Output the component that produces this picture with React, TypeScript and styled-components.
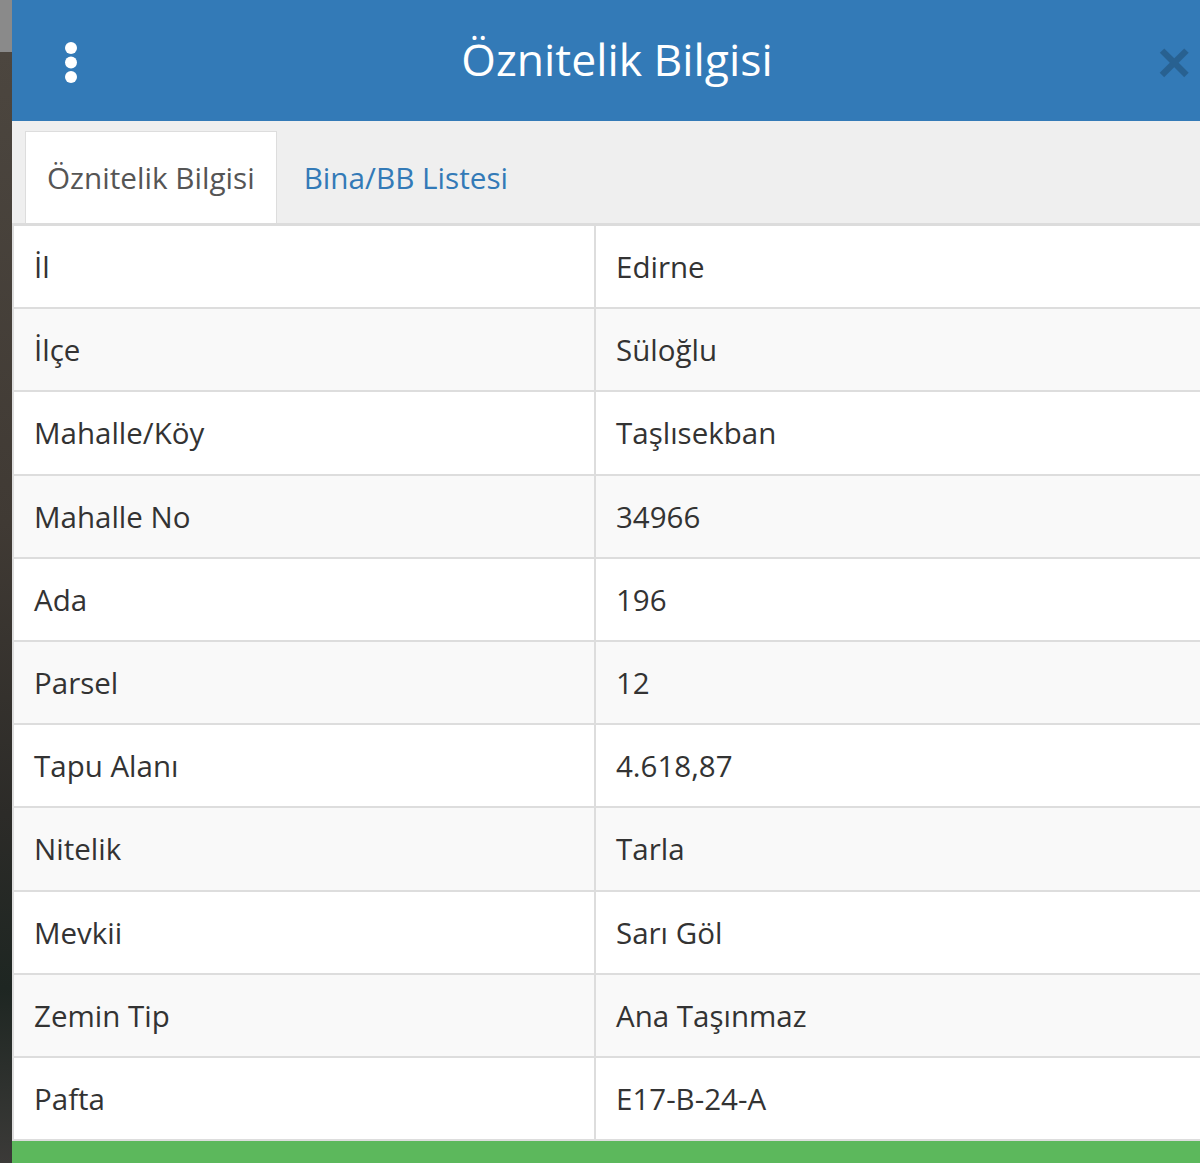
import React from "react";
import styled, { createGlobalStyle } from "styled-components";

const Global = createGlobalStyle`
  html, body { margin: 0; padding: 0; }
  body {
    width: 1200px;
    height: 1163px;
    overflow: hidden;
    font-family: "Open Sans", "Noto Sans", sans-serif;
    background: linear-gradient(to bottom, #8a8a8a 0, #8a8a8a 52px, #4c463f 52px, #403a34 45%, #2c2b28 70%, #1e2622 85%, #3b3a38 100%);
  }
`;

const Panel = styled.div`
  margin-left: 12px;
  width: 1210px;
  height: 1163px;
  background: #fff;
  display: flex;
  flex-direction: column;
`;

const Header = styled.div`
  height: 121px;
  background: #337ab7;
  display: grid;
  grid-template-columns: 1fr auto 1fr;
  align-items: center;
  padding: 0 52px;
  box-sizing: border-box;
  flex-shrink: 0;
`;

const Kebab = styled.div`
  justify-self: start;
  display: flex;
  align-items: center;
  margin-top: 4px;
`;

const Title = styled.h1`
  margin: 0;
  color: #fff;
  font-size: 44.5px;
  font-weight: 400;
  line-height: 1;
  margin-top: -2px;
`;

const Close = styled.span`
  justify-self: end;
  margin-right: -21px;
  font-family: "Liberation Sans", Arial, sans-serif;
  font-weight: 700;
  font-size: 58px;
  line-height: 1;
  color: #000;
  opacity: 0.2;
  margin-top: 2px;
`;

const TabBar = styled.div`
  height: 102px;
  background: #efefef;
  border-bottom: 3px solid #dcdcdc;
  display: flex;
  align-items: flex-end;
  padding-left: 13px;
  gap: 4px;
  flex-shrink: 0;
`;

const Tab = styled.div<{ $active?: boolean }>`
  height: 92px;
  box-sizing: border-box;
  display: flex;
  align-items: center;
  padding: 0 ${(p) => (p.$active ? "21px" : "22px")};
  font-size: 29.7px;
  background: ${(p) => (p.$active ? "#fff" : "transparent")};
  color: ${(p) => (p.$active ? "#555" : "#337ab7")};
  border: 1px solid ${(p) => (p.$active ? "#dddddd" : "transparent")};
  border-bottom: none;
`;

const Table = styled.div`
  border-left: 2px solid #dddddd;
  display: flex;
  flex-direction: column;
  flex-shrink: 0;
`;

const Row = styled.div<{ $striped: boolean }>`
  display: grid;
  grid-template-columns: 580px 1fr;
  height: 83.2px;
  box-sizing: border-box;
  border-bottom: 2px solid #dddddd;
  background: ${(p) => (p.$striped ? "#f9f9f9" : "#fff")};
`;

const Cell = styled.div<{ $value?: boolean }>`
  display: flex;
  align-items: center;
  padding-left: 20px;
  font-size: 29.5px;
  color: #333;
  border-left: ${(p) => (p.$value ? "2px solid #dddddd" : "none")};
`;

const Footer = styled.div`
  flex: 1;
  background: #5cb85c;
`;

const rows: [string, string][] = [
  ["İl", "Edirne"],
  ["İlçe", "Süloğlu"],
  ["Mahalle/Köy", "Taşlısekban"],
  ["Mahalle No", "34966"],
  ["Ada", "196"],
  ["Parsel", "12"],
  ["Tapu Alanı", "4.618,87"],
  ["Nitelik", "Tarla"],
  ["Mevkii", "Sarı Göl"],
  ["Zemin Tip", "Ana Taşınmaz"],
  ["Pafta", "E17-B-24-A"],
];

export default function App() {
  return (
    <>
      <Global />
      <Panel>
        <Header>
          <Kebab>
            <svg width="14" height="42" viewBox="0 0 14 42">
              <circle cx="7" cy="6" r="6" fill="#fff" />
              <circle cx="7" cy="20.5" r="6" fill="#fff" />
              <circle cx="7" cy="35" r="6" fill="#fff" />
            </svg>
          </Kebab>
          <Title>Öznitelik Bilgisi</Title>
          <Close>×</Close>
        </Header>
        <TabBar>
          <Tab $active>Öznitelik Bilgisi</Tab>
          <Tab>Bina/BB Listesi</Tab>
        </TabBar>
        <Table>
          {rows.map(([k, v], i) => (
            <Row key={k} $striped={i % 2 === 1}>
              <Cell>{k}</Cell>
              <Cell $value>{v}</Cell>
            </Row>
          ))}
        </Table>
        <Footer />
      </Panel>
    </>
  );
}
